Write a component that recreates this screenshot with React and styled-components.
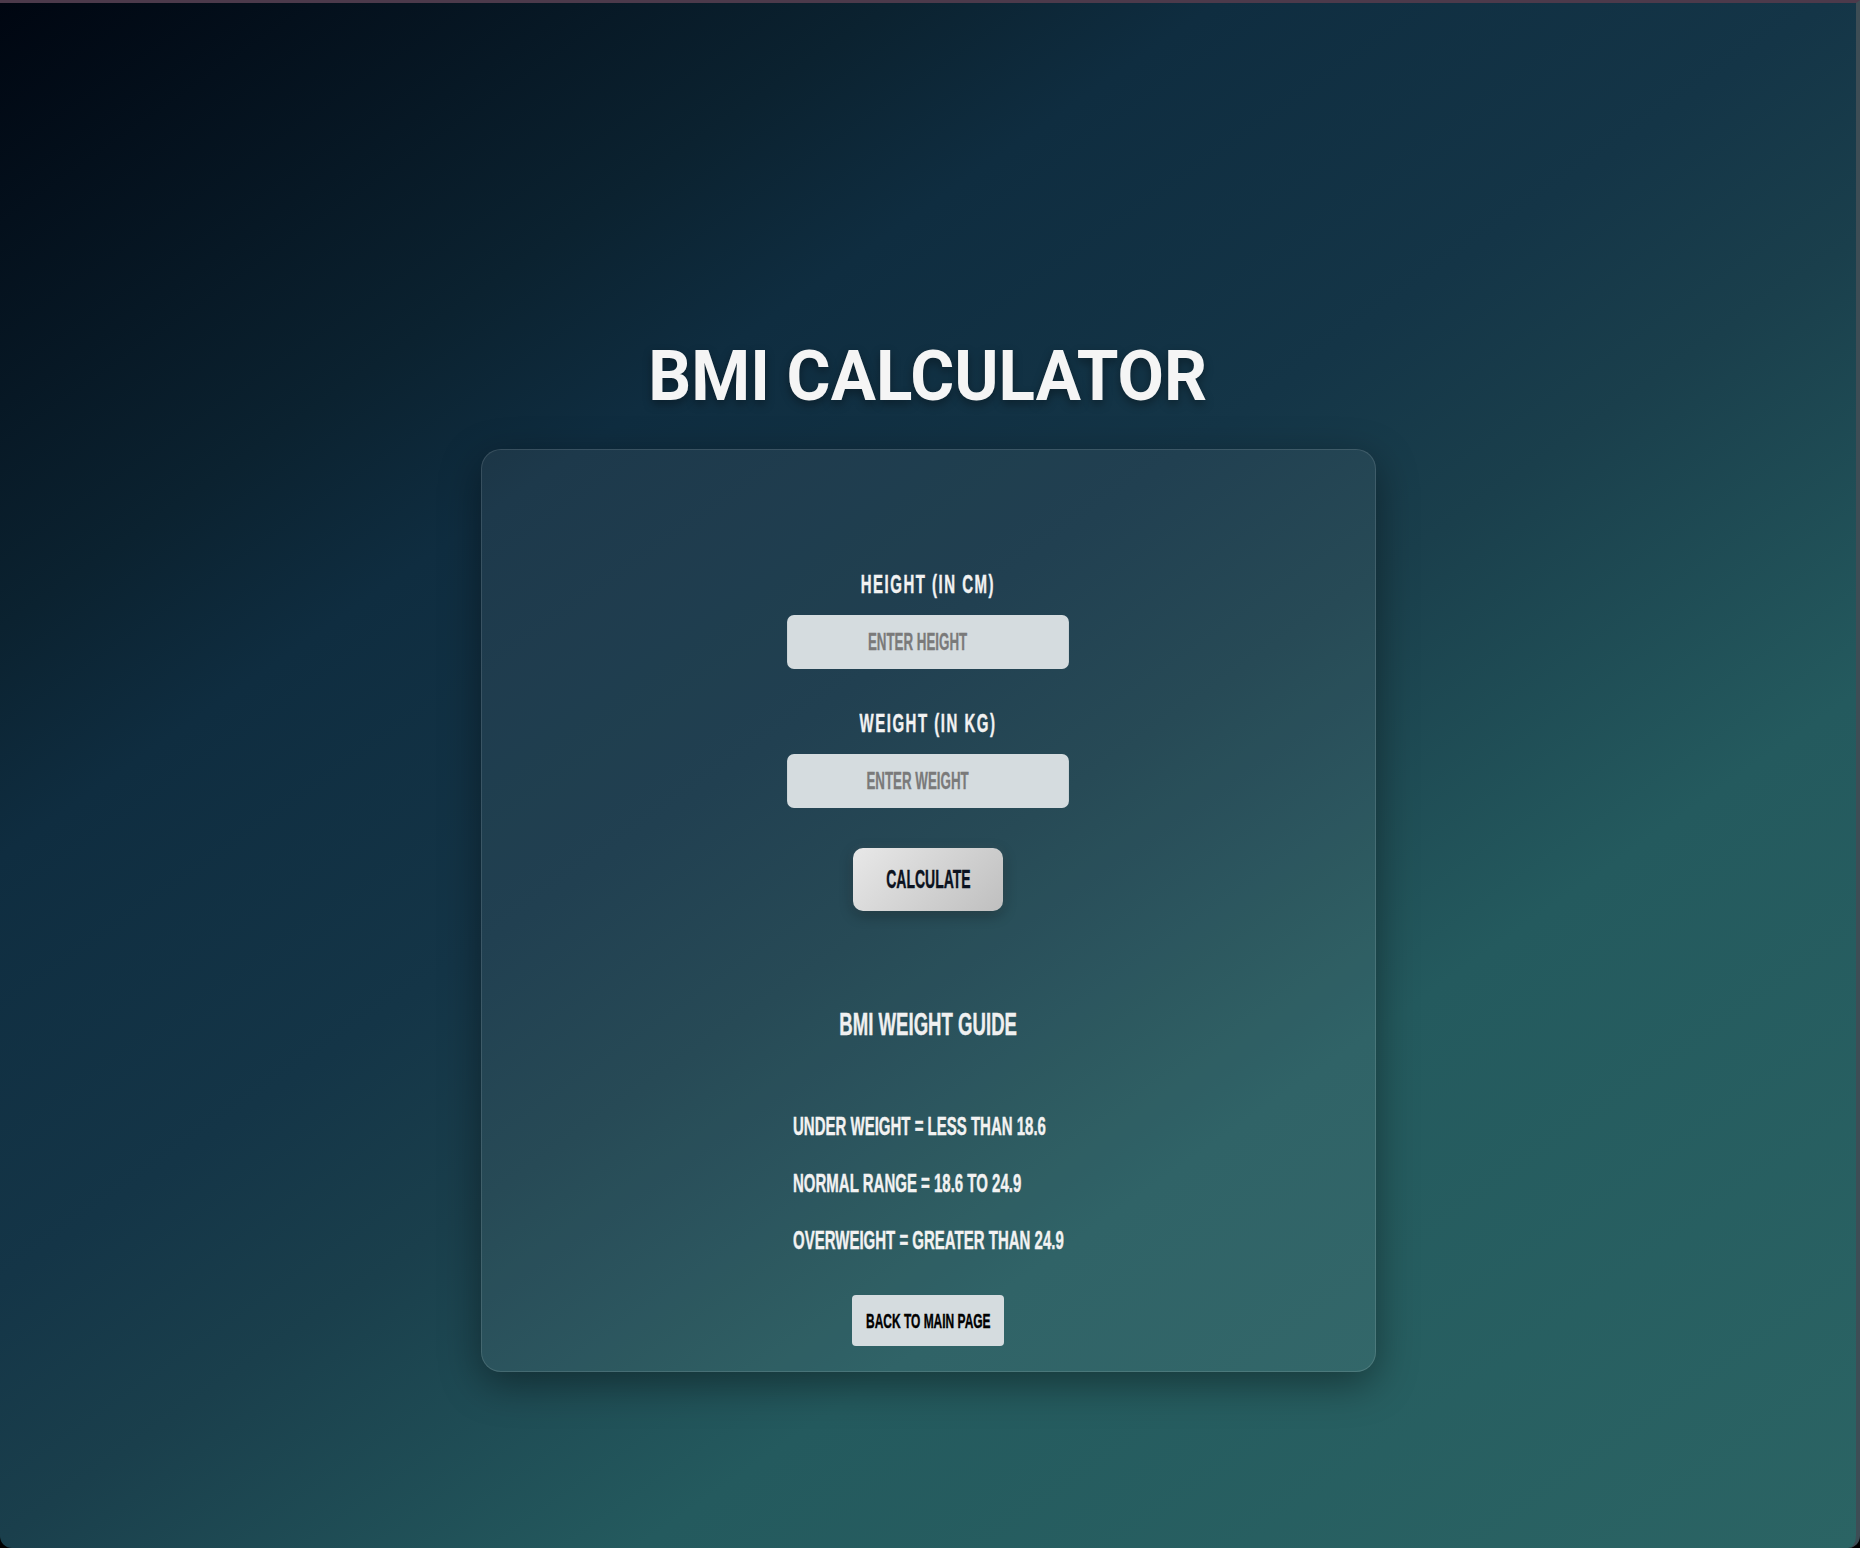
import React from 'react';
import styled, { createGlobalStyle } from 'styled-components';

const GlobalStyle = createGlobalStyle`
  html, body {
    margin: 0;
    padding: 0;
    background: #000;
  }
  body {
    font-family: "Liberation Sans", Arial, sans-serif;
  }
  * {
    box-sizing: border-box;
  }
`;

const Frame = styled.div`
  min-height: 100vh;
  border-top: 3px solid #4c3a4b;
  border-right: 4px solid #3d4d55;
  border-radius: 0 0 12px 12px;
  background: linear-gradient(
    145deg,
    #000611 0%,
    #0b2230 22%,
    #0f2d40 30%,
    #143547 45%,
    #1a3f4c 54%,
    #245a5e 70%,
    #2b6464 100%
  );
  display: flex;
  flex-direction: column;
  align-items: center;
  padding-top: 337px;
`;

const Title = styled.h1`
  margin: 0;
  font-family: Roboto, "Liberation Sans", sans-serif;
  font-weight: 700;
  font-size: 71px;
  line-height: 71px;
  color: #f5f5f5;
  text-shadow: 0 4px 10px rgba(0, 0, 0, 0.35);
  transform: scaleX(0.948);
`;

const Card = styled.div`
  width: 895px;
  margin-top: 38px;
  padding: 121px 0 25px;
  border: 1px solid rgba(255, 255, 255, 0.12);
  border-radius: 20px;
  background: rgba(255, 255, 255, 0.06);
  box-shadow: 0 12px 40px rgba(0, 0, 0, 0.4);
  display: flex;
  flex-direction: column;
  align-items: center;
`;

// narrow display face stand-in: bold sans squeezed horizontally
const Squeezed = styled.span`
  display: inline-block;
  font-weight: 700;
  white-space: nowrap;
  -webkit-text-stroke: 0.4px currentColor;
  transform: scaleX(${(p) => p.$sx || 0.6});
  transform-origin: ${(p) => (p.$left ? 'left center' : 'center')};
`;

const Label = styled.label`
  display: block;
  font-size: 25px;
  line-height: 26px;
  letter-spacing: 2.5px;
  color: #f2f2f2;
  margin-top: ${(p) => p.$gap || 0}px;
`;

// drawn wide then squeezed so the placeholder gets the same narrow face
const Field = styled.input`
  display: block;
  flex-shrink: 0;
  width: 486px;
  height: 54px;
  margin-top: 18px;
  padding: 0 36px 0 0;
  border: none;
  border-radius: 12px / 7px;
  background: #d5dcdf;
  text-align: center;
  font-family: "Liberation Sans", sans-serif;
  font-weight: 700;
  font-size: 23px;
  color: #222;
  outline: none;
  transform: scaleX(0.58);
  -webkit-text-stroke: 0.3px currentColor;

  &::placeholder {
    color: #7a7a7a;
  }
`;

const ButtonBase = styled.button`
  display: flex;
  align-items: center;
  justify-content: center;
  padding: 0;
  border: none;
  font-family: "Liberation Sans", sans-serif;
  cursor: pointer;
  overflow: visible;
`;

const CalcButton = styled(ButtonBase)`
  width: 150px;
  height: 63px;
  margin-top: 40px;
  border-radius: 10px;
  background: linear-gradient(135deg, #e8e8e8 0%, #bfbfbf 100%);
  box-shadow: 0 4px 14px rgba(0, 0, 0, 0.3), 0 0 10px rgba(255, 255, 255, 0.08);
  font-size: 25px;
  color: #0b1220;
`;

const BackButton = styled(ButtonBase)`
  width: 152px;
  height: 51px;
  margin-top: 42px;
  border-radius: 4px;
  background: #d5dcdf;
  font-size: 21px;
  color: #000;
`;

const GuideTitle = styled.h2`
  margin: 97px 0 0;
  font-size: 31px;
  line-height: 34px;
  font-weight: 700;
  color: #f0f0f0;
`;

const GuideList = styled.ul`
  list-style: none;
  width: 270px;
  margin: 71px 0 0;
  padding: 0;
  display: flex;
  flex-direction: column;
  gap: 31px;
`;

const GuideItem = styled.li`
  font-size: 25px;
  line-height: 26px;
  color: #f2f2f2;
`;

const guide = [
  'Under Weight = Less than 18.6',
  'Normal Range = 18.6 to 24.9',
  'Overweight = Greater than 24.9',
];

export default function App() {
  return (
    <>
      <GlobalStyle />
      <Frame>
        <Title>BMI CALCULATOR</Title>
        <Card>
          <Label htmlFor="height">
            <Squeezed $sx={0.6}>HEIGHT (IN CM)</Squeezed>
          </Label>
          <Field id="height" type="text" placeholder="ENTER HEIGHT" />

          <Label htmlFor="weight" $gap={41}>
            <Squeezed $sx={0.6}>WEIGHT (IN KG)</Squeezed>
          </Label>
          <Field id="weight" type="text" placeholder="ENTER WEIGHT" />

          <CalcButton>
            <Squeezed $sx={0.56}>CALCULATE</Squeezed>
          </CalcButton>

          <GuideTitle>
            <Squeezed $sx={0.6}>BMI WEIGHT GUIDE</Squeezed>
          </GuideTitle>

          <GuideList>
            {guide.map((line) => (
              <GuideItem key={line}>
                <Squeezed $sx={0.6} $left>
                  {line.toUpperCase()}
                </Squeezed>
              </GuideItem>
            ))}
          </GuideList>

          <BackButton>
            <Squeezed $sx={0.57}>BACK TO MAIN PAGE</Squeezed>
          </BackButton>
        </Card>
      </Frame>
    </>
  );
}
